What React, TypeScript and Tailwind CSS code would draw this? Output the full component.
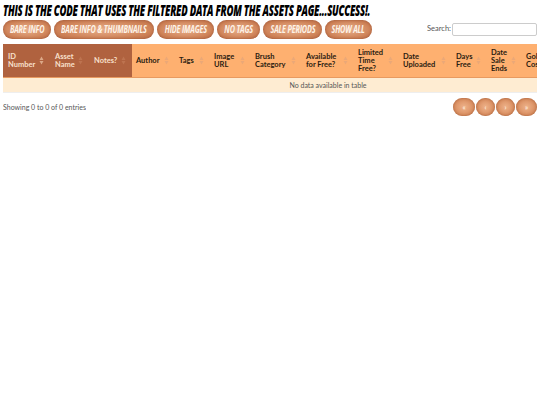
const btn = "flex items-center justify-center h-[19px] rounded-[10px] text-[#fdf3e8] bg-[radial-gradient(ellipse_at_center,#e9b08c_0%,#cd8055_70%,#b96e47_100%)] shadow-[inset_0_0_3px_#a0583a]";
const pg = "h-[18px] rounded-[10px] flex items-center justify-center text-[7px] font-bold text-[#fbe8d8] bg-[radial-gradient(ellipse_at_center,#eeb28a_0%,#d98e60_65%,#c67a50_100%)] shadow-[inset_0_0_3px_#a9623c]";

const Sort = ({ c }: { c: string }) => (
  <svg width="5" height="9" viewBox="0 0 5 9" className="shrink-0">
    <path d="M2.5 0.5 L4.5 4 H0.5Z M2.5 8.5 L4.5 5 H0.5Z" fill={c} />
  </svg>
);

const Btn = ({ w, children }: { w: string; children: string }) => (
  <div className={`${btn} ${w}`}>
    <span className="inline-block shrink-0 whitespace-nowrap uppercase italic font-bold text-[11px] tracking-[-0.3px] scale-x-[0.66] font-['Open_Sans',sans-serif]">{children}</span>
  </div>
);

const cols: [string[], number, boolean][] = [
  [["ID", "Number"], 47, true],
  [["Asset", "Name"], 39, true],
  [["Notes?"], 43, true],
  [["Author"], 43, false],
  [["Tags"], 35, false],
  [["Image", "URL"], 41, false],
  [["Brush", "Category"], 51, false],
  [["Available", "for Free?"], 52, false],
  [["Limited", "Time", "Free?"], 45, false],
  [["Date", "Uploaded"], 53, false],
  [["Days", "Free"], 35, false],
  [["Date", "Sale", "Ends"], 35, false],
  [["Gold", "Cost"], 128, false],
];

export default function App() {
  return (
    <div className="w-[540px] h-[405px] overflow-hidden bg-white font-['Lato',sans-serif]">
      <div className="pl-[3px] pt-[2px] h-[18px] text-[15px] leading-[16px] font-extrabold italic uppercase text-black whitespace-nowrap font-['Open_Sans',sans-serif]">
        <span className="inline-block origin-left scale-x-[0.633] tracking-[-0.4px]">This is the code that uses the filtered data from the assets page...success!.</span>
      </div>
      <div className="flex items-center pl-[3px] pr-[3px] h-[20px] mt-[1px]">
        <div className="flex gap-[3px]">
          <Btn w="w-[48px]">Bare Info</Btn>
          <Btn w="w-[100px]">Bare Info &amp; Thumbnails</Btn>
          <Btn w="w-[57px]">Hide Images</Btn>
          <Btn w="w-[43px]">No Tags</Btn>
          <Btn w="w-[59px]">Sale Periods</Btn>
          <Btn w="w-[47px]">Show All</Btn>
        </div>
        <div className="ml-auto flex items-center gap-[1px] text-[7.5px] text-[#555]">
          <span className="opacity-[0.99]">Search:</span>
          <div className="w-[85px] h-[13px] border border-[#ccc] rounded-[2px] bg-white" />
        </div>
      </div>
      <div className="ml-[3px] mt-[5px] w-[534px] overflow-hidden">
        <div className="w-[650px]">
          <div className="flex h-[34px] bg-[#feb070] border-b border-[#e89a60]">
            {cols.map(([lines, w, dark], i) => (
              <div key={i} className={`shrink-0 flex items-center justify-between pr-[6px] text-[7.5px] leading-[8px] font-bold ${dark ? "pl-[5px] bg-[#b0623f] text-[#f8e0cc]" : "pl-[4px] text-[#2a1c10]"}`} style={{ width: w }}>
                <div className="flex flex-col">
                  {lines.map((l) => <span key={l}>{l}</span>)}
                </div>
                <Sort c={i === 0 ? "#dba888" : dark ? "#bd7350" : "#eba877"} />
              </div>
            ))}
          </div>
          <div className="h-[15px] bg-[#feecd2] border-b border-[#eee] flex items-center justify-center text-[7px] text-[#555]">
            <span className="opacity-[0.99]">No data available in table</span>
          </div>
        </div>
      </div>
      <div className="flex items-center justify-between pl-[3px] pr-[3px] mt-[5px]">
        <div className="text-[7px] text-[#555] opacity-[0.99]">Showing 0 to 0 of 0 entries</div>
        <div className="flex gap-[1px]">
          <div className={`${pg} w-[22px]`}>«</div>
          <div className={`${pg} w-[19px]`}>‹</div>
          <div className={`${pg} w-[19px]`}>›</div>
          <div className={`${pg} w-[21px]`}>»</div>
        </div>
      </div>
    </div>
  );
}
